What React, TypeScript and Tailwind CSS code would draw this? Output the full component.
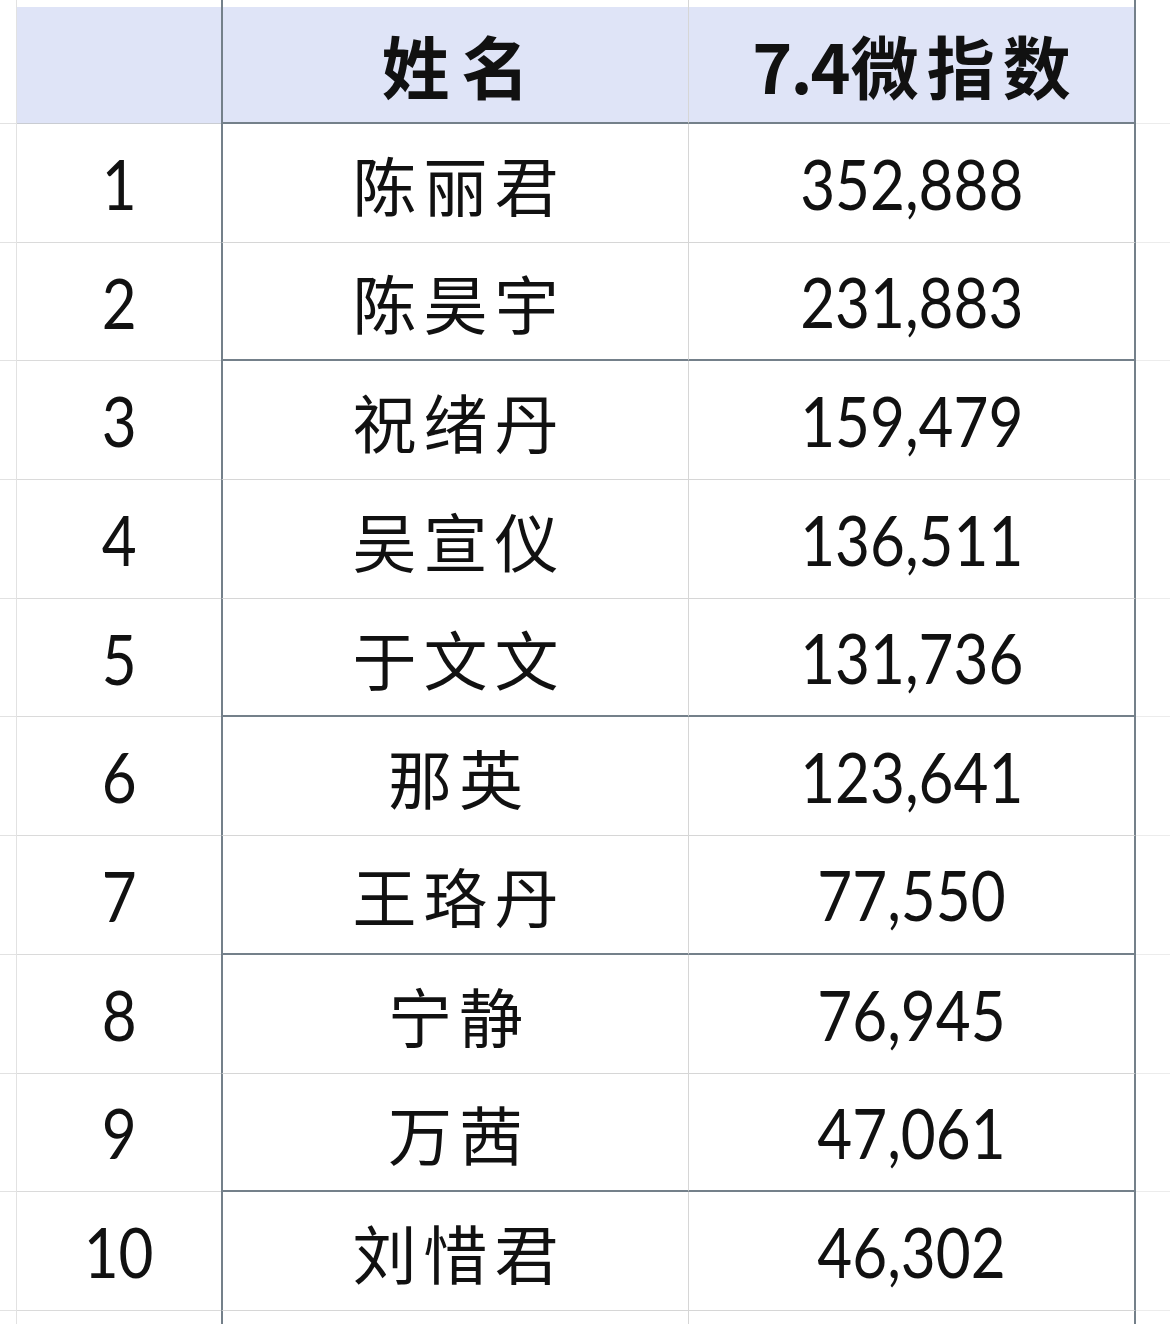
import React from 'react';

type Row = { rank: number; name: string; value: string; dark?: boolean };

const rows: Row[] = [
  { rank: 1, name: '陈丽君', value: '352,888' },
  { rank: 2, name: '陈昊宇', value: '231,883', dark: true },
  { rank: 3, name: '祝绪丹', value: '159,479' },
  { rank: 4, name: '吴宣仪', value: '136,511' },
  { rank: 5, name: '于文文', value: '131,736', dark: true },
  { rank: 6, name: '那英', value: '123,641' },
  { rank: 7, name: '王珞丹', value: '77,550', dark: true },
  { rank: 8, name: '宁静', value: '76,945' },
  { rank: 9, name: '万茜', value: '47,061', dark: true },
  { rank: 10, name: '刘惜君', value: '46,302' },
];

const num = "font-['Lato','Noto_Sans',sans-serif] text-[70px] leading-none text-[#111] inline-block scale-x-[0.86]";
const cjk = "font-['Noto_Sans_CJK_SC','Noto_Sans',sans-serif]";

export default function App() {
  return (
    <div className="w-[1170px] h-[1324px] overflow-hidden bg-white">
      {/* top strip */}
      <div className="flex h-[7px]">
        <div className="w-[17px] border-r border-[#e2e2e2]" />
        <div className="w-[204px]" />
        <div className="w-[467px] border-l-2 border-[#74808a]" />
        <div className="w-[448px] border-l border-r-2 border-l-[#d6d6d6] border-r-[#74808a]" />
        <div className="flex-1" />
      </div>

      {/* header */}
      <div className="flex h-[117px]">
        <div className="w-[17px] border-r border-b border-[#e2e2e2]" />
        <div className="w-[204px] bg-[#dfe4f7] border-b border-[#c9ccd2]" />
        <div className="w-[467px] bg-[#dfe4f7] border-l-2 border-b-2 border-[#74808a] flex items-center justify-center">
          <span className={`${cjk} text-[68px] font-bold leading-none text-[#111] tracking-[12px] pl-[12px]`}>姓名</span>
        </div>
        <div className="w-[448px] bg-[#dfe4f7] border-l border-r-2 border-b-2 border-l-[#d6d6d6] border-r-[#74808a] border-b-[#74808a] flex items-center justify-center">
          <span className={`${cjk} text-[68px] font-bold leading-none text-[#111] pl-[8px]`}>
            <span className="tracking-[-2px]">7.4</span>
            <span className="tracking-[8px] pl-[2px]">微指数</span>
          </span>
        </div>
        <div className="flex-1 border-b border-[#ececec]" />
      </div>

      {rows.map((r) => (
        <div key={r.rank} className="flex h-[118.7px]">
          <div className="w-[17px] border-r border-b border-[#e2e2e2]" />
          <div className="w-[204px] border-b border-[#dadada] flex items-center justify-center">
            <span className={num}>{r.rank}</span>
          </div>
          <div
            className={`w-[467px] border-l-2 border-l-[#74808a] flex items-center justify-center ${r.dark ? 'border-b-2 border-b-[#74808a]' : 'border-b border-b-[#d6d6d6]'}`}
          >
            <span className={`${cjk} text-[64px] leading-none text-[#111] tracking-[7px] pl-[7px]`}>{r.name}</span>
          </div>
          <div
            className={`w-[448px] border-l border-r-2 border-l-[#d6d6d6] border-r-[#74808a] flex items-center justify-center ${r.dark ? 'border-b-2 border-b-[#74808a]' : 'border-b border-b-[#d6d6d6]'}`}
          >
            <span className={num}>{r.value}</span>
          </div>
          <div className="flex-1 border-b border-[#ececec]" />
        </div>
      ))}

      {/* bottom partial row */}
      <div className="flex h-[40px]">
        <div className="w-[17px] border-r border-[#e2e2e2]" />
        <div className="w-[204px]" />
        <div className="w-[467px] border-l-2 border-[#74808a]" />
        <div className="w-[448px] border-l border-r-2 border-l-[#d6d6d6] border-r-[#74808a]" />
        <div className="flex-1" />
      </div>
    </div>
  );
}
